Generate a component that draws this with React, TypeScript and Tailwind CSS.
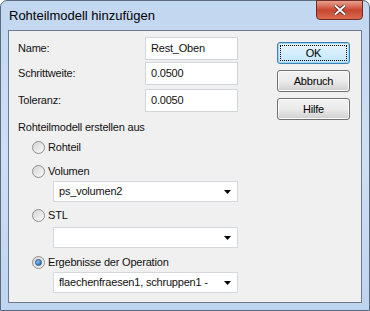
import React from "react";

const font = { fontFamily: '"Liberation Sans", Arial, sans-serif' };

function Radio({ checked }: { checked?: boolean }) {
  return (
    <span className="flex h-[13px] w-[13px] shrink-0 items-center justify-center rounded-full border border-[#8e8f8f] bg-gradient-to-br from-[#d4d4d4] to-[#fbfbfb]">
      {checked && (
        <span className="h-[7px] w-[7px] rounded-full border border-[#1b4f86] bg-gradient-to-br from-[#9ad0f5] to-[#1c6bb4]" />
      )}
    </span>
  );
}

function Field({ label, value, top }: { label: string; value: string; top: string }) {
  return (
    <div className={`flex h-[23px] items-center ${top}`}>
      <span className="w-[127px]">{label}</span>
      <div className="flex h-full w-[93px] items-center border border-[#d2d5d9] bg-white pl-[5px] text-[#111]">
        {value}
      </div>
    </div>
  );
}

function Choice({ label, checked, top }: { label: string; checked?: boolean; top: string }) {
  return (
    <div className={`ml-[14px] flex h-[20px] items-center gap-[3px] ${top}`}>
      <Radio checked={checked} />
      <span>{label}</span>
    </div>
  );
}

function Combo({ value, top }: { value: string; top: string }) {
  return (
    <div className={`ml-[35px] flex h-[21px] w-[185px] items-center justify-between whitespace-nowrap border border-[#d5d8dc] bg-white pl-[5px] pr-[6px] text-[#111] ${top}`}>
      <span>{value}</span>
      <svg width="7" height="4" viewBox="0 0 7 4" className="shrink-0">
        <path d="M0 0h7L3.5 4z" fill="#000" />
      </svg>
    </div>
  );
}

function Btn({ label, focus }: { label: string; focus?: boolean }) {
  return (
    <div
      className={`flex h-[22px] w-[73px] items-center justify-center rounded-[3px] border text-black ${
        focus
          ? "border-[#3c7fb1] bg-gradient-to-b from-[#eaf6fd] to-[#bee6fd] shadow-[inset_0_0_0_1px_#97d7f8]"
          : "border-[#707070] bg-gradient-to-b from-[#f2f2f2] via-[#ebebeb] to-[#cfcfcf] shadow-[inset_0_0_0_1px_#fcfcfc]"
      }`}
    >
      {focus ? (
        <span className="flex h-[16px] w-[67px] items-center justify-center border border-dotted border-black">{label}</span>
      ) : (
        label
      )}
    </div>
  );
}

export default function App() {
  return (
    <div className="h-[311px] w-[370px] bg-white" style={font}>
      <div className="relative flex h-[311px] w-[370px] flex-col rounded-t-[7px] border border-[#5b6b80] bg-gradient-to-b from-[#c2d7f0] via-[#cddff4] to-[#bfd4ee] px-[7px] pb-[7px]">
        <div className="flex h-[29px] items-center pl-[1px] text-[13px] text-black">Rohteilmodell hinzufügen</div>
        <div className="absolute right-[6px] top-[-1px] flex h-[20px] w-[47px] items-center justify-center rounded-b-[4px] border border-[#6f2c28] bg-gradient-to-b from-[#e8a08f] via-[#c9452f] to-[#d86a50]">
          <svg width="12" height="10" viewBox="0 0 12 10">
            <path d="M1.5 1l9 8M10.5 1l-9 8" stroke="#4a1a16" strokeWidth="3.4" strokeLinecap="square" />
            <path d="M1.5 1l9 8M10.5 1l-9 8" stroke="#fff" strokeWidth="2" strokeLinecap="square" />
          </svg>
        </div>
        <div className="flex flex-1 border border-[#6d7a8b] bg-[#f0f0f0] text-[11px] tracking-[-0.2px] text-[#111]">
          <div className="flex w-[240px] flex-col pl-[9px]">
            <Field label="Name:" value="Rest_Oben" top="mt-[6px]" />
            <Field label="Schrittweite:" value="0.0500" top="mt-[2px]" />
            <Field label="Toleranz:" value="0.0050" top="mt-[4px]" />
            <div className="mt-[5px] flex h-[20px] items-center">Rohteilmodell erstellen aus</div>
            <Choice label="Rohteil" top="" />
            <Choice label="Volumen" top="mt-[4px]" />
            <Combo value="ps_volumen2" top="" />
            <Choice label="STL" top="mt-[3px]" />
            <Combo value="" top="mt-[2px]" />
            <Choice label="Ergebnisse der Operation" checked top="mt-[4px]" />
            <Combo value="flaechenfraesen1, schruppen1 -" top="" />
          </div>
          <div className="ml-auto mr-[11px] mt-[11px] flex flex-col gap-[6px]">
            <Btn label="OK" focus />
            <Btn label="Abbruch" />
            <Btn label="Hilfe" />
          </div>
        </div>
      </div>
    </div>
  );
}
